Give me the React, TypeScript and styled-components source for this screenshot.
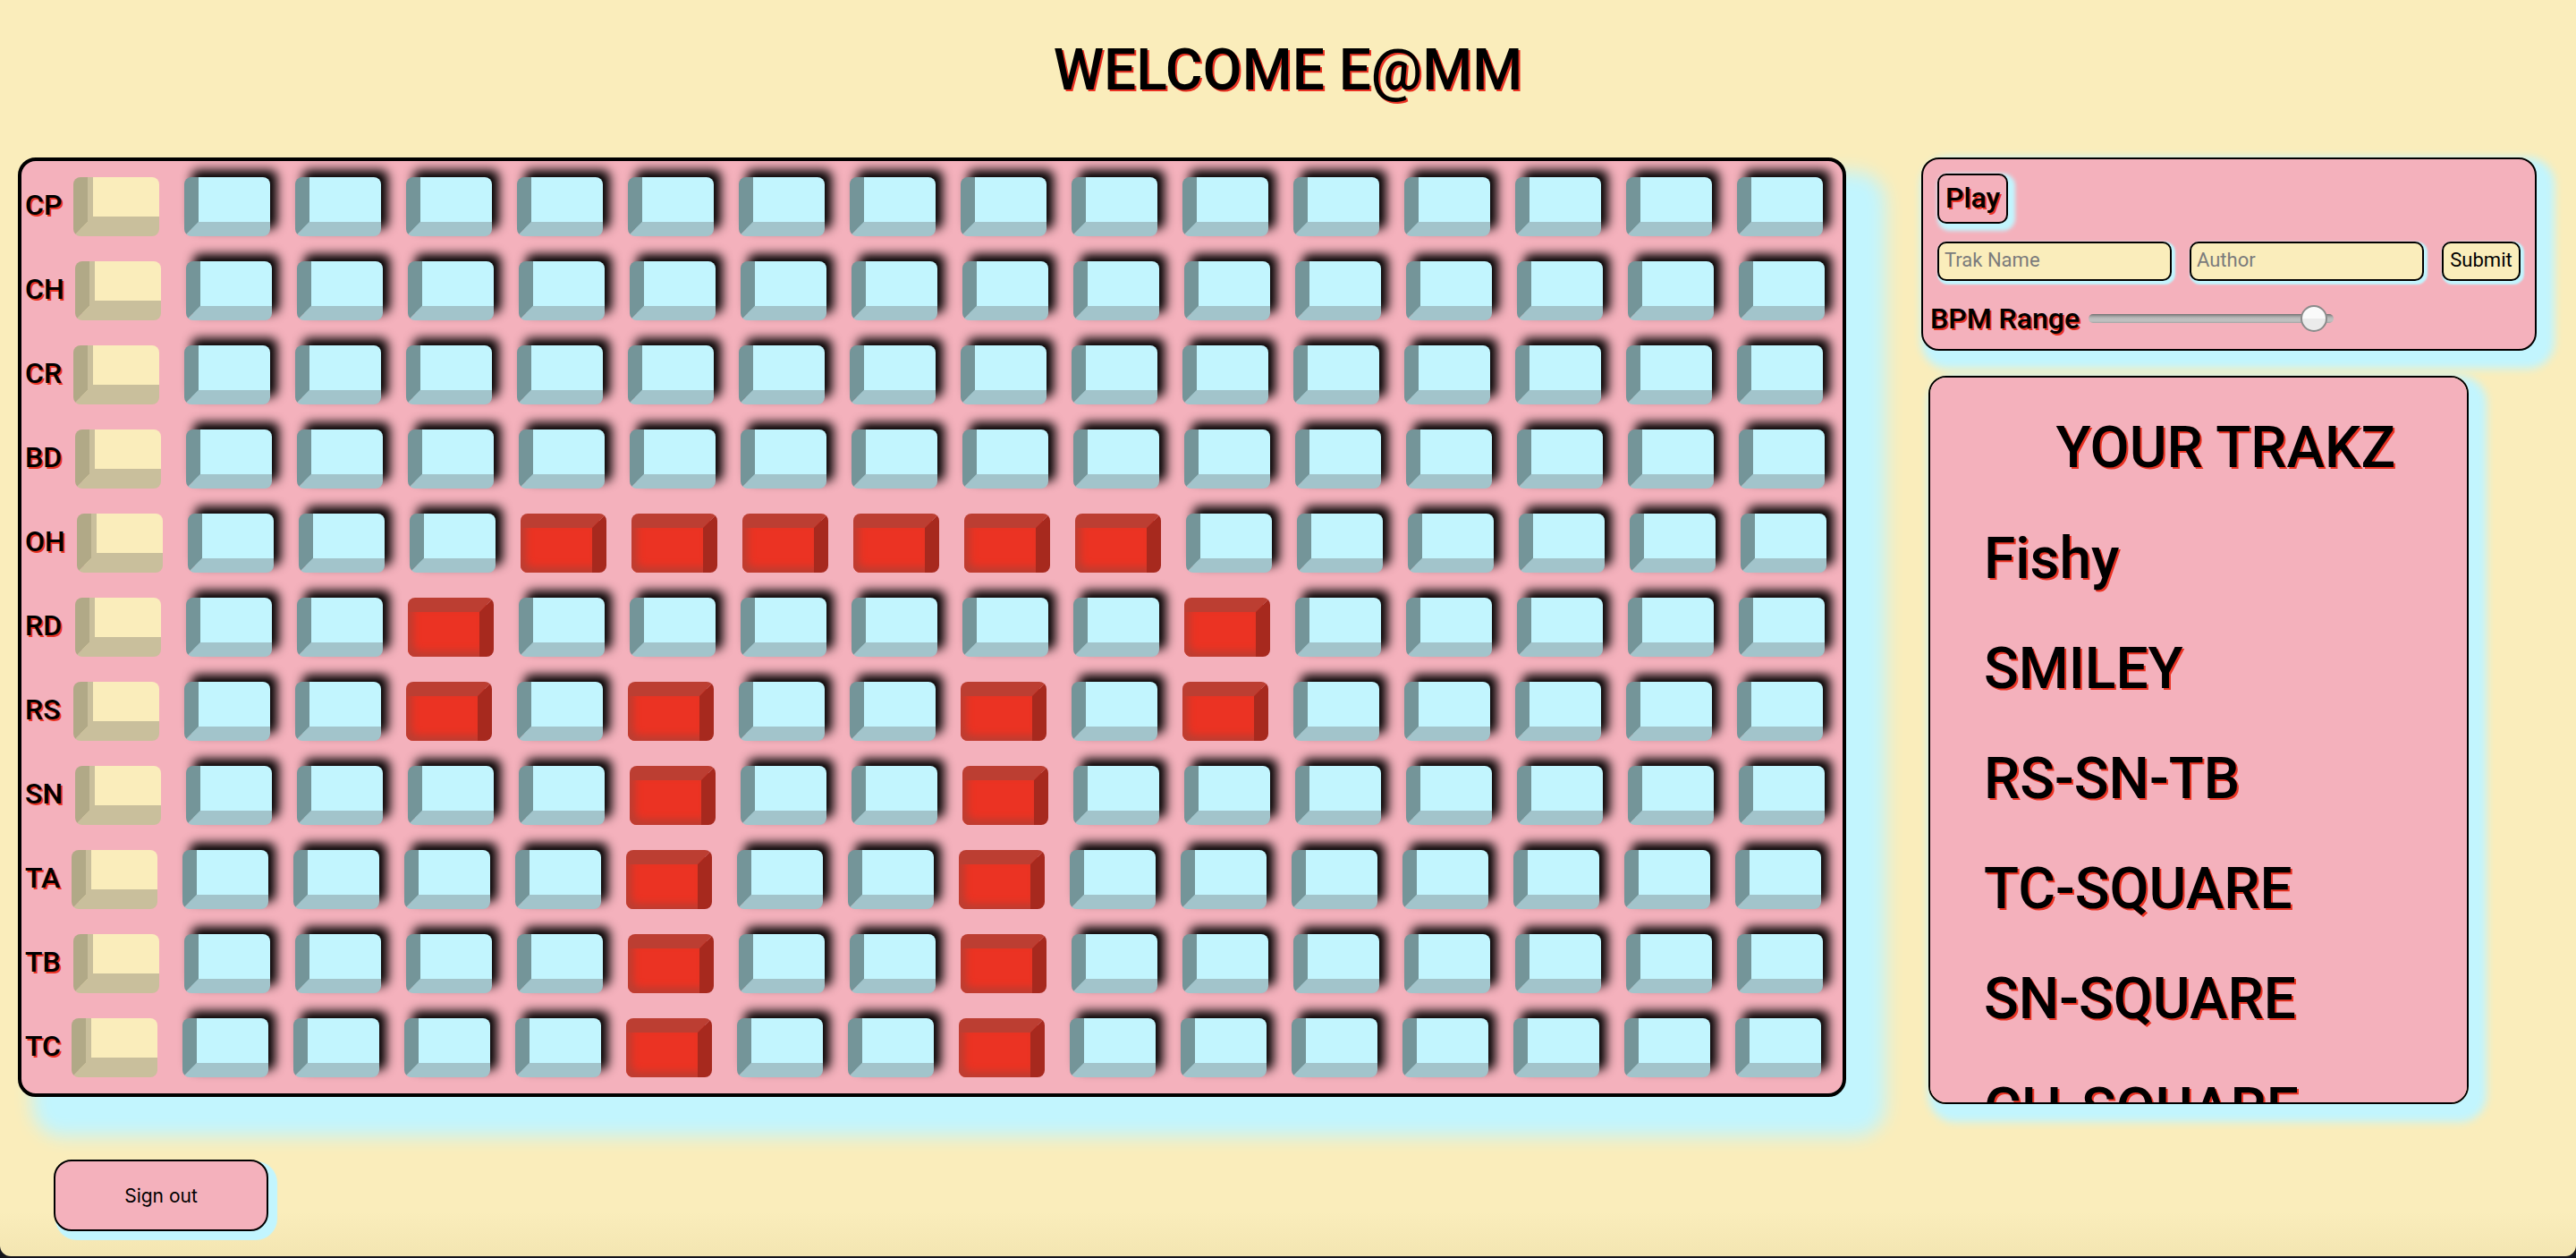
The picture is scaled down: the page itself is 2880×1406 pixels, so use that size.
import React, { useState } from "react";
import styled, { createGlobalStyle, css } from "styled-components";

const cream = "#faedbb";
const pink = "#f4b1bc";
const aqua = "#c2f5fe";
const red = "#eb3323";

const GlobalStyle = createGlobalStyle`
  * { box-sizing: border-box; }
  body { margin: 0; background: #15151c; }
  button, input { font: inherit; color: inherit; margin: 0; }
`;

const Page = styled.div`
  height: calc(100vh - 2px);
  overflow: hidden;
  background: linear-gradient(to bottom, transparent calc(100% - 50px), rgba(120, 90, 0, 0.05)), ${cream};
  border-radius: 0 0 12px 12px;
  font-family: Roboto, "Liberation Sans", sans-serif;
  font-weight: 500;
  color: #000;
`;

const Title = styled.h1`
  margin: 0;
  padding: 40px 0 58px;
  text-align: center;
  font-size: 64px;
  line-height: 78px;
  font-weight: 500;
  text-shadow: 2px 2px 0 ${red};
`;

const Main = styled.main`
  display: flex;
  align-items: flex-start;
  justify-content: space-between;
  padding: 0 44px 0 20px;
`;

const Board = styled.section`
  display: flex;
  flex-direction: column;
  gap: 28px;
  padding: 18px 18px 18px 4px;
  border: 4px solid #000;
  border-radius: 20px;
  background: ${pink};
  box-shadow: 30px 30px 20px 14px ${aqua};
`;

const Row = styled.div`
  display: flex;
  gap: 28px;
`;

const Label = styled.span<{ $width: number }>`
  width: ${(p) => p.$width}px;
  margin-right: -28px;
  font-size: 32px;
  line-height: 62px;
  text-shadow: 2px 2px 0 ${red};
`;

const key = css`
  width: 96px;
  height: 66px;
  padding: 0;
  border: 0 solid;
  border-radius: 8px;
  cursor: pointer;
`;

const Pad = styled.button`
  ${key}
  border-width: 0 0 16px 16px;
  border-color: #c9bf9c #c9bf9c #c9bf9c #b1a987;
  background: ${cream};
  box-shadow: inset 6px -6px 0 #c9bf9c;
`;

const Step = styled.button<{ $on: boolean }>`
  ${key}
  ${(p) =>
    p.$on
      ? css`
          border-width: 16px 16px 0 0;
          border-color: #bc3e32 #a7291e #bc3e32 #bc3e32;
          background: ${red};
          box-shadow: inset 6px -6px 8px #bc3e32;
        `
      : css`
          border-width: 0 0 16px 16px;
          border-color: #a2c4cb #a2c4cb #a2c4cb #749599;
          background: ${aqua};
          box-shadow: 8px -8px 12px #000;
        `}
`;

const Side = styled.aside`
  display: flex;
  flex-direction: column;
  align-items: flex-start;
  gap: 28px;
`;

const panel = css`
  border: 2px solid #000;
  border-radius: 20px;
  background: ${pink};
  box-shadow: 10px 10px 10px 10px ${aqua};
`;

const Controls = styled.form`
  ${panel}
  height: 216px;
  padding: 16px;
`;

const PlayButton = styled.button`
  display: block;
  height: 56px;
  padding: 0 7px 2px;
  border: 2px solid #000;
  border-radius: 10px;
  background: ${pink};
  box-shadow: 4px 4px 4px 4px ${aqua};
  font-size: 32px;
  line-height: 48px;
  text-shadow: 2px 2px 0 ${red};
`;

const Fields = styled.div`
  display: flex;
  gap: 20px;
  margin-top: 20px;
`;

const field = css`
  height: 44px;
  padding: 0 6px 4px;
  border: 2px solid #000;
  border-radius: 10px;
  background: ${cream};
  box-shadow: 2px 2px 2px 2px ${aqua};
  font-size: 22px;
  font-weight: 400;
`;

const TextField = styled.input`
  ${field}
  width: 262px;
  &::placeholder { color: #7b7b7b; opacity: 1; }
`;

const Submit = styled.button`
  ${field}
  width: 88px;
`;

const Tempo = styled.div`
  display: flex;
  align-items: center;
  gap: 10px;
  margin: 22px 0 0 -8px;
  label {
    font-size: 32px;
    line-height: 40px;
    text-shadow: 2px 2px 0 ${red};
  }
`;

const Range = styled.input`
  appearance: none;
  width: 274px;
  height: 30px;
  padding: 0;
  background: transparent;
  &::-webkit-slider-runnable-track {
    height: 10px;
    border-radius: 5px;
    background: linear-gradient(#727272, #a9a9a9 30%, #bdbdbd 50%, #c0c0c0 80%, #a2a2a2);
  }
  &::-webkit-slider-thumb {
    appearance: none;
    width: 30px;
    height: 30px;
    margin-top: -10px;
    border: 2px solid #8b8b8b;
    border-radius: 50%;
    background: linear-gradient(#fafafa 50%, #ebebeb 50%);
  }
`;

const Tracks = styled.section`
  ${panel}
  width: 604px;
  height: 814px;
  margin-left: 8px;
  overflow-y: auto;
  scrollbar-width: none;
  font-size: 64px;
  line-height: 78px;
  text-shadow: 2px 2px 0 ${red};
  h2 {
    margin: 0;
    padding: 40px 80px 46px;
    font: inherit;
    text-align: right;
  }
  ul {
    display: flex;
    flex-direction: column;
    gap: 45px;
    margin: 0;
    padding: 0 60px 46px;
    list-style: none;
  }
`;

const SignOut = styled.button`
  width: 240px;
  height: 80px;
  margin: 62px 0 0 60px;
  border: 2px solid #000;
  border-radius: 20px;
  background: ${pink};
  box-shadow: 6px 6px 1px 4px ${aqua};
  font-family: Inter, sans-serif;
  font-size: 21px;
  font-weight: 400;
`;

const rows = [
  { name: "CP", width: 54, on: [] },
  { name: "CH", width: 56, on: [] },
  { name: "CR", width: 54, on: [] },
  { name: "BD", width: 56, on: [] },
  { name: "OH", width: 58, on: [3, 4, 5, 6, 7, 8] },
  { name: "RD", width: 56, on: [2, 9] },
  { name: "RS", width: 54, on: [2, 4, 7, 9] },
  { name: "SN", width: 56, on: [4, 7] },
  { name: "TA", width: 52, on: [4, 7] },
  { name: "TB", width: 54, on: [4, 7] },
  { name: "TC", width: 52, on: [4, 7] },
];

const tracks = ["Fishy", "SMILEY", "RS-SN-TB", "TC-SQUARE", "SN-SQUARE", "CH-SQUARE"];

export default function App() {
  const [grid, setGrid] = useState<boolean[][]>(() =>
    rows.map((r) => Array.from({ length: 15 }, (_, i) => (r.on as number[]).includes(i)))
  );
  const [bpm, setBpm] = useState(97);
  const toggle = (r: number, c: number) =>
    setGrid((g) => g.map((line, i) => (i === r ? line.map((v, j) => (j === c ? !v : v)) : line)));

  return (
    <>
      <GlobalStyle />
      <Page>
        <Title>WELCOME E@MM</Title>
        <Main>
          <Board>
            {rows.map((row, r) => (
              <Row key={row.name}>
                <Label $width={row.width}>{row.name}</Label>
                <Pad type="button" aria-label={row.name} />
                {grid[r].map((on, c) => (
                  <Step key={c} type="button" $on={on} aria-pressed={on} aria-label={`${row.name} ${c + 1}`} onClick={() => toggle(r, c)} />
                ))}
              </Row>
            ))}
          </Board>
          <Side>
            <Controls onSubmit={(e) => e.preventDefault()}>
              <PlayButton type="button">Play</PlayButton>
              <Fields>
                <TextField placeholder="Trak Name" aria-label="Trak Name" />
                <TextField placeholder="Author" aria-label="Author" />
                <Submit type="submit">Submit</Submit>
              </Fields>
              <Tempo>
                <label htmlFor="bpm">BPM Range</label>
                <Range id="bpm" type="range" min={0} max={100} value={bpm} onChange={(e) => setBpm(Number(e.target.value))} />
              </Tempo>
            </Controls>
            <Tracks>
              <h2>YOUR TRAKZ</h2>
              <ul>
                {tracks.map((t) => (
                  <li key={t}>{t}</li>
                ))}
              </ul>
            </Tracks>
          </Side>
        </Main>
        <SignOut type="button">Sign out</SignOut>
      </Page>
    </>
  );
}
